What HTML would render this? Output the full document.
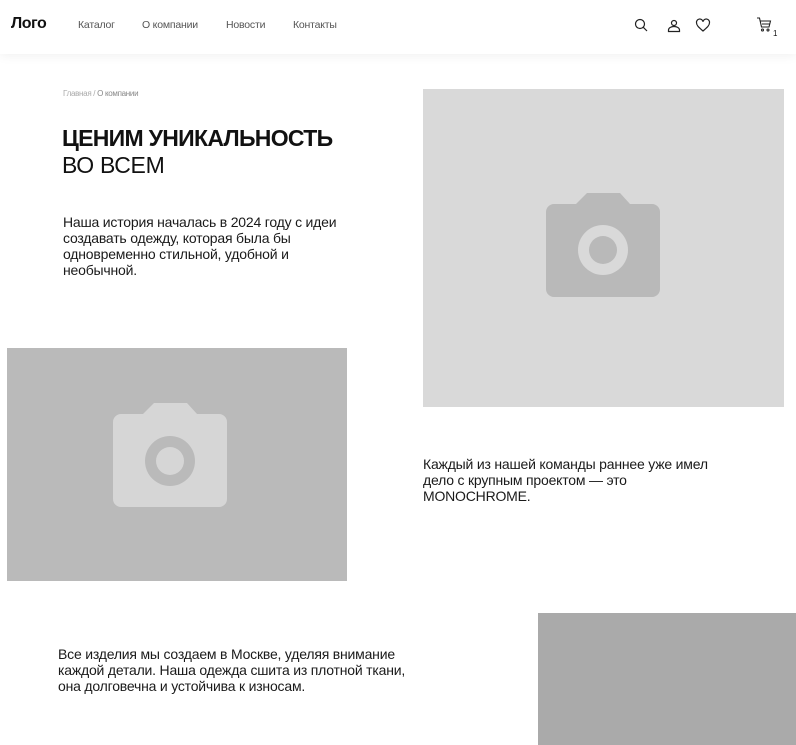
<!DOCTYPE html>
<html><head><meta charset="utf-8"><style>
body{margin:0;width:796px;height:745px;overflow:hidden;background:#fff;font-family:"Liberation Sans",sans-serif;color:#111;position:relative}
.a{position:absolute;white-space:nowrap}
header{position:absolute;left:0;top:0;width:796px;height:54px;background:#fff;box-shadow:0 2px 10px rgba(0,0,0,0.06)}
.nav{font-size:10.5px;color:#555;top:19px;letter-spacing:-0.2px}
.p{font-size:14px;line-height:16px;color:#1a1a1a;letter-spacing:-0.2px}
</style></head><body>
<header>
<div class="a" style="left:11px;top:15px;font-size:16px;font-weight:bold;letter-spacing:-0.5px">Лого</div>
<div class="a nav" style="left:78px">Каталог</div>
<div class="a nav" style="left:142px">О компании</div>
<div class="a nav" style="left:226px">Новости</div>
<div class="a nav" style="left:293px">Контакты</div>
<svg class="a" style="left:630px;top:16px" width="100" height="22" fill="none" stroke="#222" stroke-width="1.2">
<circle cx="10" cy="8" r="4.5"/><path d="M13.3 11.3L17 15"/>
<circle cx="44" cy="7" r="2.5"/><path d="M38.5 15.5h11v-1.5c0-2-2.5-3.5-5.5-3.5s-5.5 1.5-5.5 3.5z"/>
<path d="M73 15c-4-3.5-6.5-5.5-6.5-8.2a3.2 3.2 0 0 1 6.5-1 3.2 3.2 0 0 1 6.5 1c0 2.7-2.5 4.7-6.5 8.2z"/>
</svg>
<svg class="a" style="left:756px;top:16px" width="16" height="18" fill="none" stroke="#222" stroke-width="1.1">
<path d="M1 2h2.5l2 9h7.5l1.5-6H4.5M6 8h8"/><circle cx="6.5" cy="14" r="1"/><circle cx="12" cy="14" r="1"/>
</svg>
<div class="a" style="left:773px;top:29px;font-size:8px">1</div>
</header>
<div class="a" style="left:63px;top:89px;font-size:8px;color:#aaa;letter-spacing:-0.3px">Главная / <span style="color:#888">О компании</span></div>
<div class="a" style="left:62px;top:125px;font-size:23px;line-height:27px;font-weight:bold;letter-spacing:-0.7px">ЦЕНИМ УНИКАЛЬНОСТЬ</div>
<div class="a" style="left:62px;top:152px;font-size:23px;line-height:27px;letter-spacing:-0.3px">ВО ВСЕМ</div>
<div class="a p" style="left:63px;top:214px">Наша история началась в 2024 году с идеи<br>создавать одежду, которая была бы<br>одновременно стильной, удобной и<br>необычной.</div>
<div class="a" style="left:423px;top:89px;width:361px;height:318px;background:#d9d9d9"></div>
<svg class="a" style="left:546px;top:193px" width="115" height="105"><path d="M30 11L41 0h33l10 11h22a8 8 0 0 1 8 8v77a8 8 0 0 1-8 8H8a8 8 0 0 1-8-8V19a8 8 0 0 1 8-8z" fill="#b9b9b9"/><circle cx="57" cy="57" r="25" fill="#d9d9d9"/><circle cx="57" cy="57" r="14" fill="#b9b9b9"/></svg>
<div class="a" style="left:7px;top:348px;width:340px;height:233px;background:#bababa"></div>
<svg class="a" style="left:113px;top:403px" width="115" height="105"><path d="M30 11L41 0h33l10 11h22a8 8 0 0 1 8 8v77a8 8 0 0 1-8 8H8a8 8 0 0 1-8-8V19a8 8 0 0 1 8-8z" fill="#d6d6d6"/><circle cx="57" cy="58" r="25" fill="#bababa"/><circle cx="57" cy="58" r="14" fill="#d6d6d6"/></svg>
<div class="a p" style="left:423px;top:456px">Каждый из нашей команды раннее уже имел<br>дело с крупным проектом — это<br>MONOCHROME.</div>
<div class="a p" style="left:58px;top:646px">Все изделия мы создаем в Москве, уделяя внимание<br>каждой детали. Наша одежда сшита из плотной ткани,<br>она долговечна и устойчива к износам.</div>
<div class="a" style="left:538px;top:613px;width:258px;height:132px;background:#aaaaaa"></div>
</body></html>
